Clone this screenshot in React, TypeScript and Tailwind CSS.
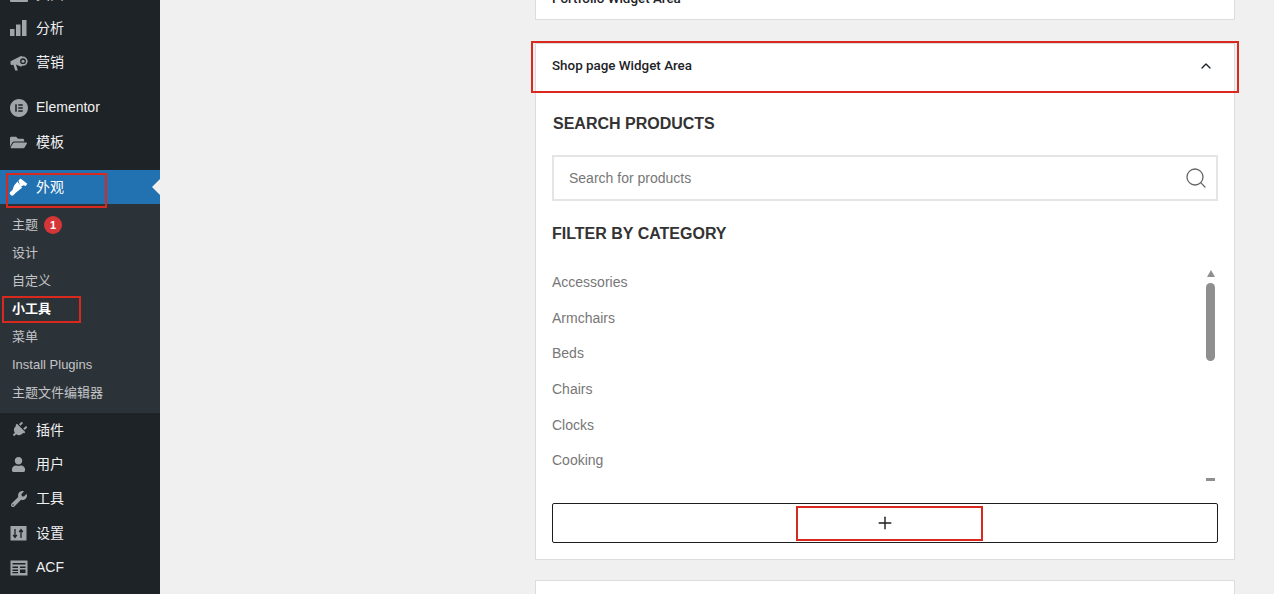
import { ReactNode } from 'react';
import { FaFolderOpen, FaPlug, FaUser, FaWrench } from 'react-icons/fa';
import { SiElementor } from 'react-icons/si';
import { ChevronUp, Plus, Search } from 'lucide-react';

const font = { fontFamily: '"Liberation Sans", "Noto Sans CJK SC", sans-serif' };
const titleFont = { fontFamily: 'Roboto, "Liberation Sans", sans-serif' };

function BarsIcon() {
  return (
    <svg width="17" height="17" viewBox="0 0 17 17" fill="currentColor">
      <rect x="0" y="9" width="4.5" height="7" />
      <rect x="6" y="4.5" width="4.5" height="11.5" />
      <rect x="12" y="0" width="4.5" height="16" />
    </svg>
  );
}

function MegaphoneIcon() {
  return (
    <svg width="18" height="18" viewBox="0 0 18 18" fill="currentColor">
      <path d="M0.5 7.2 10.5 2.2c1-.5 1.6 0 1.6.8v8.6c0 .8-.6 1.3-1.6.8L6 10.4l.9 3.2.9 2.9H5.2L3.4 10.7 1.8 11C.8 11 .5 10.2.5 9.4z" />
      <circle cx="13" cy="7.2" r="4.6" />
      <circle cx="13" cy="7.2" r="2.9" fill="#1d2327" />
      <circle cx="13" cy="7.2" r="1.5" />
    </svg>
  );
}

function BrushIcon() {
  return (
    <svg width="19" height="18" viewBox="0 0 19 18" fill="currentColor">
      <path d="M9.5 2.5 11.5.5l6.8 5.2-1.6 2.2-2.2-.7L11.5 9z" />
      <path d="M8.5 3.5 13 9.8 6.5 15l-2.2 2.2c-.8.8-2 .4-2.8-.5-.8-.9-1.1-2 -.3-2.7L3.5 12l1.6-4.6z" />
    </svg>
  );
}

function TopIcon() {
  return (
    <svg width="18" height="16" viewBox="0 0 18 16" fill="currentColor">
      <rect width="18" height="16" rx="1" />
    </svg>
  );
}

function SlidersIcon() {
  return (
    <svg width="17" height="15" viewBox="0 0 17 15">
      <rect width="16" height="14.5" x="0.5" fill="currentColor" />
      <path d="M5 3v8M3.2 9l1.8 2.4L6.8 9M11 12V4M9.2 6L11 3.6 12.8 6" stroke="#1d2327" strokeWidth="1.3" fill="none" />
    </svg>
  );
}

function TableIcon() {
  return (
    <svg width="18" height="16" viewBox="0 0 18 16">
      <rect width="17" height="15" x="0.5" y="0.5" fill="currentColor" />
      <path d="M2.5 3h13v1.6h-13zM2.5 6.5h5.5v1.6h-5.5zM10 6.5h5.5v1.6H10zM2.5 9.5h5.5v1.6h-5.5zM10 9.5h5.5v3.5H10zM2.5 12h5.5v1.2h-5.5z" fill="#1d2327" />
    </svg>
  );
}

function MenuItem({ icon, label, mt }: { icon: ReactNode; label: string; mt?: string }) {
  return (
    <div className={`flex h-[34.4px] items-center text-[14px] text-[#f0f0f1] ${mt ?? ''}`}>
      <span className="flex w-[36px] shrink-0 justify-center pl-[1px] text-[#a0a5aa]">{icon}</span>
      <span>{label}</span>
    </div>
  );
}

function SubItem({ children, active }: { children: ReactNode; active?: boolean }) {
  return (
    <div className={`flex h-[28px] shrink-0 items-center pl-[12px] text-[13px] ${active ? 'font-bold text-white' : 'text-[#c3c4c7]'}`}>
      {children}
    </div>
  );
}

function RedBox({ className }: { className: string }) {
  return <div className={`absolute border-2 border-[#d9281e] ${className}`} />;
}

const categories = ['Accessories', 'Armchairs', 'Beds', 'Chairs', 'Clocks', 'Cooking'];

export default function App() {
  return (
    <div className="relative flex h-[594px] w-[1274px] overflow-hidden bg-[#f0f0f0]" style={font}>
      {/* Sidebar */}
      <div className="-mt-[23px] flex w-[160px] shrink-0 flex-col bg-[#1d2327]">
        <MenuItem icon={<TopIcon />} label="页面" />
        <MenuItem icon={<BarsIcon />} label="分析" />
        <MenuItem icon={<MegaphoneIcon />} label="营销" />
        <MenuItem icon={<SiElementor size={18} />} label="Elementor" mt="mt-[10.6px]" />
        <MenuItem icon={<FaFolderOpen size={17} />} label="模板" />
        <div className="relative mt-[10.4px] flex h-[34px] items-center bg-[#2271b1] pt-[1px] text-[14px] text-white">
          <span className="flex w-[36px] shrink-0 justify-center pl-[1px]">
            <BrushIcon />
          </span>
          <span>外观</span>
          <span className="absolute right-0 top-[9px] h-0 w-0 border-y-[8px] border-r-[8px] border-y-transparent border-r-[#f0f0f0]" />
        </div>
        <div className="flex h-[209px] flex-col bg-[#2c3338] pt-[7px]">
          <SubItem>
            主题
            <span className="ml-[6px] flex h-[18px] w-[18px] items-center justify-center rounded-full bg-[#d63638] text-[11px] font-bold text-white">1</span>
          </SubItem>
          <SubItem>设计</SubItem>
          <SubItem>自定义</SubItem>
          <SubItem active>小工具</SubItem>
          <SubItem>菜单</SubItem>
          <SubItem>Install Plugins</SubItem>
          <SubItem>主题文件编辑器</SubItem>
        </div>
        <MenuItem icon={<FaPlug size={16} className="rotate-45" />} label="插件" />
        <MenuItem icon={<FaUser size={15} />} label="用户" />
        <MenuItem icon={<FaWrench size={16} />} label="工具" />
        <MenuItem icon={<SlidersIcon />} label="设置" />
        <MenuItem icon={<TableIcon />} label="ACF" />
        <div className="flex-1" />
      </div>

      {/* Main column */}
      <div className="-mt-[30px] ml-[375px] flex w-[700px] shrink-0 flex-col">
        <div className="h-[50px] shrink-0 border border-[#dcdcde] bg-white pl-[16px] pt-[18px] text-[13.4px] font-medium text-[#1d2327]" style={titleFont}>
          Portfolio Widget Area
        </div>

        <div className="mt-[23px] flex h-[517px] shrink-0 flex-col border border-[#dcdcde] bg-white">
          <div className="flex h-[45px] shrink-0 items-center justify-between pl-[16px] pr-[20px] text-[13.4px] font-medium text-[#1d2327]" style={titleFont}>
            <span>Shop page Widget Area</span>
            <ChevronUp size={16} strokeWidth={2} className="-mt-[2px]" />
          </div>
          <div className="flex flex-1 flex-col px-[16px]">
            <h3 className="mt-[23px] pl-[1px] text-[16px] font-bold leading-[24px] text-[#333]">SEARCH PRODUCTS</h3>
            <div className="mt-[19px] flex h-[46px] items-center justify-between border-2 border-[#e5e5e5] pl-[15px] pr-[8px] text-[14px] text-[#777]">
              <span>Search for products</span>
              <Search size={24} strokeWidth={1.3} className="text-[#666]" />
            </div>
            <h3 className="mt-[21px] text-[16px] font-bold leading-[24px] text-[#333]">FILTER BY CATEGORY</h3>
            <div className="relative mt-[19px] flex h-[239px] flex-col">
              {categories.map((c) => (
                <div key={c} className="flex h-[35.6px] shrink-0 items-center text-[14px] text-[#777]">
                  {c}
                </div>
              ))}
              {/* scrollbar */}
              <div className="absolute right-[3px] top-[5px] flex h-[211px] w-[9px] flex-col items-center">
                <span className="h-0 w-0 border-x-[4.5px] border-b-[7px] border-x-transparent border-b-[#8f8f8f]" />
                <span className="mt-[6px] h-[78px] w-[9px] rounded-full bg-[#8f8f8f]" />
                <span className="mt-auto h-[3px] w-[9px] bg-[#8f8f8f]" />
              </div>
            </div>
            <div className="mt-[-1px] flex h-[40px] items-center justify-center rounded-[2px] border border-[#1d1d1d] bg-white text-[#1e1e1e]">
              <Plus size={20} strokeWidth={1.7} />
            </div>
          </div>
        </div>

        <div className="mt-[20px] h-[60px] shrink-0 border border-[#dcdcde] bg-white" />
      </div>

      {/* Red annotation boxes */}
      <RedBox className="left-[6px] top-[173px] h-[35px] w-[101px]" />
      <RedBox className="left-[2px] top-[296px] h-[27px] w-[79px]" />
      <RedBox className="left-[531px] top-[41px] h-[52px] w-[708px]" />
      <RedBox className="left-[796px] top-[506px] h-[35px] w-[187px]" />
    </div>
  );
}
